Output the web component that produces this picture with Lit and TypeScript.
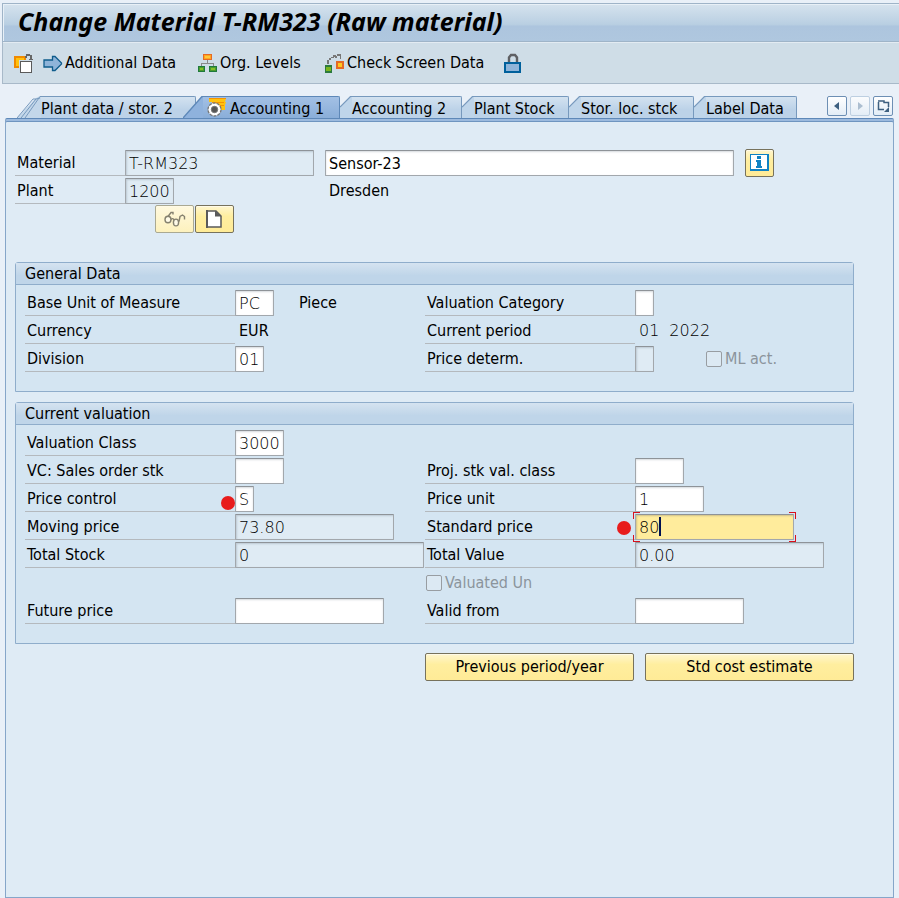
import { LitElement, html, css, svg, nothing, TemplateResult } from 'lit';
import { customElement } from 'lit/decorators.js';
import { classMap } from 'lit/directives/class-map.js';
import { styleMap } from 'lit/directives/style-map.js';

interface Field {
  id: string;
  label: string;
  width?: number;
  value?: string;
  readonly?: boolean;
  text?: TemplateResult | string;
  mono?: boolean;
  after?: TemplateResult;
  marker?: 'low' | 'far';
  focused?: boolean;
}

interface Tab {
  label: string;
  width: number;
  kind: 'first' | 'active' | 'plain';
}

const iconOtherMaterial = svg`<svg width="20" height="20" viewBox="0 0 20 20" shape-rendering="crispEdges">
  <rect x="1" y="4" width="10" height="10" fill="#ffc20e" stroke="#f08a00" stroke-width="2"/>
  <path d="M11 3h1V1h4v1h2v4h1v1h-1v1h-2V7h-1V6h1V3h-3v2h-2z" fill="#666"/>
  <rect x="5" y="7" width="14" height="13" fill="#cedce6"/>
  <rect x="7" y="9" width="10" height="11" fill="#fff"/>
  <path d="M6 8h12v12H6zM7 9v10h10V9z" fill="#5a5a5a" fill-rule="evenodd"/></svg>`;
const iconArrow = svg`<svg width="20" height="20" viewBox="0 0 20 20">
  <path d="M1 7h8.500V3.500h2.500l6.500 6.500v1l-6.500 6.500H9.500V14H1z" fill="#8fb4d9" stroke="#0f5c8c" stroke-width="1.300"/></svg>`;
const iconOrg = svg`<svg width="20" height="20" viewBox="0 0 20 20" shape-rendering="crispEdges">
  <path d="M9 7h1v3h6v4h-1v-3H4v3H3v-4h6z" fill="#8a8a8a"/>
  <path d="M5 1h9v6H5z" fill="#e56a24"/><path d="M6 2h7v4H6z" fill="#ffa51f"/><path d="M7 3h5v2H7z" fill="#ffc83a"/>
  <path d="M0 13h7v6H0zM11 13h8v6h-8z" fill="#1f7a3d"/><path d="M1 14h5v4H1zM12 14h6v4h-6z" fill="#4c9b2c"/><path d="M2 15h3v2H2zM13 15h4v2h-4z" fill="#86c02a"/></svg>`;
const iconCheck = svg`<svg width="20" height="20" viewBox="0 0 20 20" shape-rendering="crispEdges">
  <path d="M2 7h2v4H2zM4 5h2v2H4zM6 4h3v1H6zM8 2h3v2H8zM10 3h2v2h-2zM12 1h4v5h-1V3h-3z" fill="#777"/>
  <path d="M0 12h7v8H0z" fill="#2c7a3c"/><path d="M1 14h5v4H1z" fill="#7ab51d"/>
  <path d="M11 8h8v8h-8z" fill="#e56a24"/><path d="M13 10h4v4h-4z" fill="#ffc820"/></svg>`;
const iconLock = svg`<svg width="20" height="20" viewBox="0 0 20 20">
  <path d="M5 10V4.500L7 2h4l2 2.500V10" fill="none" stroke="#5f6064" stroke-width="2.400"/>
  <rect x="1" y="10" width="15" height="9" fill="#8fb4d9" stroke="#00609c" stroke-width="2"/></svg>`;
const iconSelected = svg`<svg width="22" height="20" viewBox="0 0 22 20">
  <path d="M2 1h17l-1 4h1l-1 3v5H9L5 5H2z" fill="#ffc20e"/>
  <path d="M2 1.500h17M5 5.500h12M10 8.500h7" stroke="#f59300" stroke-width="1"/>
  <circle cx="7.500" cy="12.500" r="6.500" fill="#fff" stroke="#777" stroke-width="1.300" stroke-dasharray="3 1"/>
  <circle cx="7.500" cy="12.500" r="3.200" fill="#555" stroke="#777"/></svg>`;
const iconGlasses = svg`<svg width="22" height="18" viewBox="0 0 22 18" fill="none" stroke="#85816f" stroke-width="1.400">
  <path d="M2.500 8.500L7 2.500h2v2M15 11.500l1-5 2.500-1.500 2 1.500v3"/>
  <ellipse cx="4" cy="9.500" rx="3" ry="3.200" fill="#fffbe8"/><ellipse cx="12" cy="12.500" rx="2.600" ry="3.400" fill="#fffbe8"/>
  <path d="M7 9.500q2-2 3 .5"/></svg>`;
const iconPage = svg`<svg width="18" height="18" viewBox="0 0 18 18">
  <path d="M1 1h9l5 5v11H1z" fill="#fff" stroke="#5a5a5a" stroke-width="1.500"/><path d="M9 .5v6h6.500z" fill="#5a5a5a"/><path d="M1 0v18" stroke="#5a5a5a" stroke-width="2"/></svg>`;
const iconInfo = svg`<svg width="20" height="18" viewBox="0 0 20 18" shape-rendering="crispEdges">
  <path d="M0 0h19v17H0z" fill="#0f82c3"/><path d="M1 1h16v14H1z" fill="#fff"/>
  <path d="M7 2h4v3H7zM6 6h5v6h1v2H6v-2h1V8H6z" fill="#0f82c3"/></svg>`;

const slant: Record<Tab['kind'], TemplateResult> = {
  first: html`<svg width="24" height="22" viewBox="0 0 24 22">
    <path d="M0 22L17 4l2-2L23 0h1v22z" fill="#c3d7ea"/>
    <path d="M0 22L16 3h3M4 22L19 3l4-1M8 22L23 .5h1" fill="none" stroke="#7799bd" stroke-width="1"/></svg>`,
  active: html`<svg width="20" height="22" viewBox="0 0 20 22">
    <path d="M0 22L19 0h1v22z" fill="#8fb2dd"/><path d="M0 22L19 .5h1" fill="none" stroke="#5e88b8" stroke-width="1.400"/></svg>`,
  plain: html`<svg width="12" height="22" viewBox="0 0 12 22">
    <path d="M0 11L11 0h1v22H0z" fill="#bfd5ea"/><path d="M0 11L10.500 .5H12" fill="none" stroke="#7799bd" stroke-width="1.200"/></svg>`,
};

const tabs: Tab[] = [
  { label: 'Plant data / stor. 2', width: 179, kind: 'first' },
  { label: 'Accounting 1', width: 157, kind: 'active' },
  { label: 'Accounting 2', width: 122, kind: 'plain' },
  { label: 'Plant Stock', width: 107, kind: 'plain' },
  { label: 'Stor. loc. stck', width: 125, kind: 'plain' },
  { label: 'Label Data', width: 103, kind: 'plain' },
];

const check = (id: string, label: string) => html`
  <span class="check"><input type="checkbox" id=${id} disabled /><label for=${id}>${label}</label></span>`;

const general: Array<[Field, Field]> = [
  [
    { id: 'uom', label: 'Base Unit of Measure', width: 39, value: 'PC', after: html`<span class="unit">Piece</span>` },
    { id: 'vcat', label: 'Valuation Category', width: 19, value: '' },
  ],
  [
    { id: 'cur', label: 'Currency', text: 'EUR' },
    { id: 'period', label: 'Current period', text: html`<span>01</span><span>2022</span>`, mono: true },
  ],
  [
    { id: 'div', label: 'Division', width: 29, value: '01' },
    { id: 'pdet', label: 'Price determ.', width: 19, value: '', readonly: true, after: html`<span class="ml">${check('ml', 'ML act.')}</span>` },
  ],
];

const valuation: Array<[Field | null, Field | TemplateResult | null]> = [
  [{ id: 'vclass', label: 'Valuation Class', width: 49, value: '3000' }, null],
  [
    { id: 'vcs', label: 'VC: Sales order stk', width: 49, value: '' },
    { id: 'proj', label: 'Proj. stk val. class', width: 49, value: '' },
  ],
  [
    { id: 'pctl', label: 'Price control', width: 19, value: 'S', marker: 'low' },
    { id: 'punit', label: 'Price unit', width: 69, value: '1' },
  ],
  [
    { id: 'moving', label: 'Moving price', width: 159, value: '73.80', readonly: true },
    { id: 'std', label: 'Standard price', width: 159, value: '80', marker: 'far', focused: true },
  ],
  [
    { id: 'stock', label: 'Total Stock', width: 189, value: '0', readonly: true },
    { id: 'total', label: 'Total Value', width: 189, value: '0.00', readonly: true },
  ],
  [null, check('valun', 'Valuated Un')],
  [
    { id: 'future', label: 'Future price', width: 149, value: '' },
    { id: 'valid', label: 'Valid from', width: 109, value: '' },
  ],
];

@customElement('app-root')
export class AppRoot extends LitElement {
  static styles = css`
    :host {
      display: flex;
      flex-direction: column;
      box-sizing: border-box;
      min-height: 100vh;
      padding: 3px 0 0 2px;
      background: #e9f0f8;
      color: #000;
      font: 16px/24px 'DejaVu Sans Condensed', 'DejaVu Sans', sans-serif;
    }
    * { box-sizing: border-box; }
    svg { display: block; flex: none; }
    button, input { font: inherit; color: inherit; margin: 0; }
    button { padding: 0; border: 0; background: none; }

    .title {
      height: 39px;
      padding-left: 15px;
      border: 1px solid #9fb4c8;
      border-right: 0;
      background: linear-gradient(#d6e3ee, #b9cfe2 55%, #adc5de 60%, #afc7df);
      box-shadow: inset 1px 1px #e8f0f7;
    }
    h1 {
      margin: 0;
      font: italic bold 25px/34px 'Noto Sans', sans-serif;
      white-space: nowrap;
    }
    .toolbar {
      display: grid;
      grid-template-columns: 29px 155px 127px 179px auto;
      align-items: center;
      justify-content: start;
      height: 42px;
      padding-left: 11px;
      border: solid #a8b9c9;
      border-width: 0 0 1px 1px;
      background: #cfdde7;
      box-shadow: inset 0 1px #e3ebf2;
    }
    .toolbar button { display: flex; align-items: center; gap: 2px; white-space: nowrap; }

    .strip {
      display: flex;
      justify-content: space-between;
      align-items: flex-start;
      margin: 12px 6px 0 15px;
    }
    .tabs { display: flex; }
    .tab { display: flex; height: 22px; line-height: 24px; white-space: nowrap; text-align: left; }
    .tab + .active { margin-left: -13px; z-index: 1; }
    .tab-body {
      flex: 1;
      display: flex;
      height: 22px;
      border: solid #7799bd;
      border-width: 1px 1px 0 0;
      border-radius: 0 2px 0 0;
      background: linear-gradient(#d3e2f0, #bcd2e8 60%);
    }
    .tab.active .tab-body {
      gap: 1px;
      padding-left: 4px;
      border-color: #5e88b8;
      background: linear-gradient(#a3c0e4, #8aaed9);
    }
    .nav { display: flex; gap: 3px; }
    .nav button {
      display: grid;
      place-items: center;
      width: 20px;
      height: 20px;
      border: 1px solid #6d8fb4;
      border-radius: 2px;
      background: linear-gradient(#fff, #e3edf6);
    }
    .nav button:disabled { border-color: #b3c7dc; opacity: 0.8; }

    .panel {
      flex: 1;
      margin: 0 5px 0 3px;
      padding: 31px 39px 16px 9px;
      border: 1px solid #86a6c9;
      border-top: 1px solid #5e88b8;
      border-radius: 2px 2px 0 0;
      background: #dfebf5;
      box-shadow: inset 0 2px #9cbade, inset 0 3px #6f95c0;
    }

    .line { display: flex; height: 28px; align-items: flex-start; }
    .name {
      width: 210px;
      height: 26px;
      flex: none;
      padding-left: 2px;
      border-bottom: 1px solid #b4b9be;
      line-height: 26px;
      white-space: nowrap;
    }
    .head .name { width: 110px; }
    .field { position: relative; flex: none; }
    .box {
      display: block;
      width: 100%;
      height: 26px;
      padding: 1px 0 0 3px;
      border: 1px solid #a2a7ac;
      border-top-color: #8e9398;
      border-radius: 1px;
      outline: 0;
      background: #fff;
      box-shadow: inset 0 1px 2px #d5d9dd;
      font: 200 16px/23px 'DejaVu Sans', sans-serif;
    }
    .box.prose { font: inherit; line-height: 23px; }
    .box.readonly { background: #dfebf4; box-shadow: inset 1px 1px 2px #bcc8d2; }
    .box.focused { background: #ffec9c; box-shadow: inset 1px 1px 2px #cfc08a; }
    .text { padding-left: 4px; line-height: 26px; }
    .text.mono { display: flex; gap: 10px; font-family: 'DejaVu Sans', sans-serif; font-weight: 200; }
    .unit { padding-left: 25px; line-height: 26px; }
    .ml { padding-left: 52px; }
    .head .description { flex: 1; max-width: 409px; margin-left: 11px; }
    .plant-name { padding-left: 155px; line-height: 26px; }

    .dot { position: absolute; width: 14px; height: 14px; border-radius: 50%; background: #e81c1c; }
    .dot.low { left: -14px; top: 10px; }
    .dot.far { left: -18px; top: 7px; }
    .caret { position: absolute; left: 24px; top: 3px; width: 2px; height: 19px; background: #001050; }
    .corner { position: absolute; width: 7px; height: 7px; border: 0 solid #d8101c; }
    .tl { left: -2px; top: -2px; border-width: 1px 0 0 1px; }
    .tr { right: -2px; top: -2px; border-width: 1px 1px 0 0; }
    .bl { left: -2px; bottom: -2px; border-width: 0 0 1px 1px; }
    .br { right: -2px; bottom: -2px; border-width: 0 1px 1px 0; }

    .yellow {
      display: grid;
      place-items: center;
      height: 28px;
      border: 1px solid #77725c;
      border-radius: 2px;
      background: linear-gradient(#fff6cf, #ffee9f 40%, #ffeb97);
      box-shadow: inset 0 1px #fffae6;
    }
    .yellow:disabled { border-color: #aaa992; background: linear-gradient(#fff9df, #fdf1bd); }
    .info { width: 29px; margin: -1px 0 0 11px; }
    .tools { display: flex; gap: 1px; padding-left: 140px; margin-top: -1px; }
    .tools button { width: 39px; }

    .group {
      margin: 0 0 10px;
      border: 1px solid #8fadcb;
      border-radius: 3px 3px 0 0;
      background: #d4e5f2;
    }
    .tools + .group { margin-top: 29px; }
    h2 {
      height: 22px;
      margin: 0;
      padding-left: 9px;
      border-bottom: 1px solid #8fadcb;
      background: linear-gradient(#d5e3f0, #bfd5e9 60%);
      font: inherit;
      line-height: 21px;
    }
    .grid {
      display: grid;
      grid-template-columns: 400px minmax(0, 1fr);
      padding: 5px 0 17px 9px;
    }
    .check { display: inline-flex; align-items: center; gap: 3px; height: 26px; color: #8b949c; white-space: nowrap; }
    .check input {
      appearance: none;
      width: 16px;
      height: 16px;
      border: 1px solid #989da2;
      border-radius: 2px;
      background: #dce9f3;
    }
    .line > .check { padding-left: 1px; }
    .actions { display: flex; justify-content: flex-end; gap: 11px; margin-top: -1px; }
    .actions button { width: 209px; }
  `;

  private field(f: Field) {
    if (f.text !== undefined) {
      return html`<span class="name">${f.label}</span>
        <span class=${classMap({ text: true, mono: !!f.mono })}>${f.text}</span>`;
    }
    return html`<label class="name" for=${f.id}>${f.label}</label>
      <span class="field" style=${styleMap({ width: `${f.width}px` })}>
        <input
          id=${f.id}
          class=${classMap({ box: true, readonly: !!f.readonly, focused: !!f.focused })}
          .value=${f.value ?? ''}
          ?readonly=${f.readonly}
        />
        ${f.marker ? html`<i class="dot ${f.marker}"></i>` : nothing}
        ${f.focused
          ? html`<i class="caret"></i><i class="corner tl"></i><i class="corner tr"></i><i class="corner bl"></i
              ><i class="corner br"></i>`
          : nothing}
      </span>
      ${f.after ?? nothing}`;
  }

  private cell(c: Field | TemplateResult | null) {
    return html`<div class="line">${c === null ? nothing : 'id' in c ? this.field(c) : c}</div>`;
  }

  render() {
    return html`
      <header class="title"><h1>Change Material T-RM323 (Raw material)</h1></header>
      <div class="toolbar" role="toolbar">
        <button aria-label="Other material">${iconOtherMaterial}</button>
        <button>${iconArrow}Additional Data</button>
        <button>${iconOrg}Org. Levels</button>
        <button>${iconCheck}Check Screen Data</button>
        <button aria-label="Lock">${iconLock}</button>
      </div>
      <div class="strip">
        <div class="tabs" role="tablist">
          ${tabs.map(
            (t) => html`<button
              role="tab"
              class=${classMap({ tab: true, active: t.kind === 'active' })}
              style=${styleMap({ width: `${t.width}px` })}
            >${slant[t.kind]}<span class="tab-body">${t.kind === 'active' ? iconSelected : nothing}${t.label}</span></button>`
          )}
        </div>
        <div class="nav">
          <button aria-label="Previous tab">
            <svg width="8" height="8" viewBox="0 0 8 8"><path d="M6 0v8L1 4z" fill="#3e6080" /></svg>
          </button>
          <button aria-label="Next tab" disabled>
            <svg width="8" height="8" viewBox="0 0 8 8"><path d="M2 0v8l5-4z" fill="#9db2c7" /></svg>
          </button>
          <button aria-label="Tab list">
            <svg width="14" height="14" viewBox="0 0 14 14">
              <path d="M8 10.500H2.500V3M2 2h6v1.500h4.500V8" fill="none" stroke="#3e6080" stroke-width="1.500" />
              <path d="M13 8v5H8z" fill="#3e6080" />
            </svg>
          </button>
        </div>
      </div>
      <main class="panel">
        <div class="head line">
          <label class="name" for="mat">Material</label>
          <span class="field" style=${styleMap({ width: '189px' })}><input id="mat" class="box readonly" readonly .value=${'T-RM323'} /></span>
          <input class="box prose description" aria-label="Description" .value=${'Sensor-23'} />
          <button class="yellow info" aria-label="Information">${iconInfo}</button>
        </div>
        <div class="head line">
          <label class="name" for="plant">Plant</label>
          <span class="field" style=${styleMap({ width: '49px' })}><input id="plant" class="box readonly" readonly .value=${'1200'} /></span>
          <span class="plant-name">Dresden</span>
        </div>
        <div class="tools">
          <button class="yellow" aria-label="Display" disabled>${iconGlasses}</button>
          <button class="yellow" aria-label="Create">${iconPage}</button>
        </div>
        <section class="group">
          <h2>General Data</h2>
          <div class="grid">${general.map((r) => r.map((c) => this.cell(c)))}</div>
        </section>
        <section class="group">
          <h2>Current valuation</h2>
          <div class="grid">${valuation.map((r) => r.map((c) => this.cell(c)))}</div>
        </section>
        <div class="actions">
          <button class="yellow">Previous period/year</button>
          <button class="yellow">Std cost estimate</button>
        </div>
      </main>
    `;
  }
}
